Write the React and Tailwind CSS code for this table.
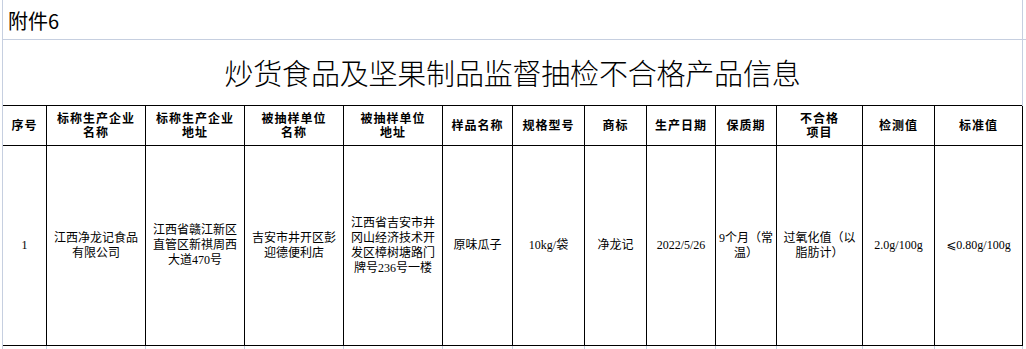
import React from "react";

const widths = [
  "w-[44px]",
  "w-[99px]",
  "w-[99px]",
  "w-[99px]",
  "w-[99px]",
  "w-[70px]",
  "w-[72px]",
  "w-[62px]",
  "w-[69px]",
  "w-[61px]",
  "w-[86px]",
  "w-[72px]",
  "w-[88px]",
];

const headers = [
  ["序号"],
  ["标称生产企业", "名称"],
  ["标称生产企业", "地址"],
  ["被抽样单位", "名称"],
  ["被抽样单位", "地址"],
  ["样品名称"],
  ["规格型号"],
  ["商标"],
  ["生产日期"],
  ["保质期"],
  ["不合格", "项目"],
  ["检测值"],
  ["标准值"],
];

const row = [
  ["1"],
  ["江西净龙记食品", "有限公司"],
  ["江西省赣江新区", "直管区新祺周西", "大道470号"],
  ["吉安市井开区彭", "迎德便利店"],
  ["江西省吉安市井", "冈山经济技术开", "发区樟树塘路门", "牌号236号一楼"],
  ["原味瓜子"],
  ["10kg/袋"],
  ["净龙记"],
  ["2022/5/26"],
  ["9个月（常", "温）"],
  ["过氧化值（以", "脂肪计）"],
  ["2.0g/100g"],
  ["⩽0.80g/100g"],
];

function Lines({ lines }) {
  return lines.map((l, i) => (
    <span key={i} className="block whitespace-nowrap">
      {l}
    </span>
  ));
}

export default function App() {
  return (
    <div className="w-[1026px] h-[349px] bg-white overflow-hidden pl-[2px] text-black">
      {/* 附件 row */}
      <div className="flex border-b border-[#c6cfe0]">
        <div className="w-[1021px] h-[39px] border-l border-r border-[#c6cfe0] flex items-center pl-[5px] pt-[3px] font-['Noto_Sans_CJK_SC',sans-serif] text-[20px]">
          附件6
        </div>
      </div>

      {/* title */}
      <div className="w-[1021px] h-[66px] border-l border-r border-[#c6cfe0]">
        <div className="h-full border-b border-black flex items-center justify-center font-['Noto_Sans_CJK_SC',sans-serif] font-light text-[29px] tracking-[-0.2px]">
          炒货食品及坚果制品监督抽检不合格产品信息
        </div>
      </div>

      {/* header */}
      <div className="w-[1021px] flex border-l border-[#c6cfe0]">
        {headers.map((h, i) => (
          <div
            key={i}
            className={`${widths[i]} h-[40px] border-r border-b border-black flex flex-col items-center justify-center text-center font-['Liberation_Serif','Noto_Sans_CJK_SC',serif] font-bold text-[12px] leading-[14px] tracking-[1px]`}
          >
            <Lines lines={h} />
          </div>
        ))}
      </div>

      {/* data */}
      <div className="w-[1021px] flex border-l border-[#c6cfe0]">
        {row.map((c, i) => (
          <div
            key={i}
            className={`${widths[i]} h-[200px] border-r border-b border-black flex flex-col items-center justify-center text-center font-['Liberation_Serif','Noto_Sans_CJK_SC','DejaVu_Sans',serif] text-[12px] leading-[15px]`}
          >
            <Lines lines={c} />
          </div>
        ))}
      </div>

      {/* next sheet row */}
      <div className="w-[1021px] flex border-l border-[#c6cfe0]">
        {widths.map((w, i) => (
          <div key={i} className={`${w} h-[4px] border-r border-[#c6cfe0]`} />
        ))}
      </div>
    </div>
  );
}
